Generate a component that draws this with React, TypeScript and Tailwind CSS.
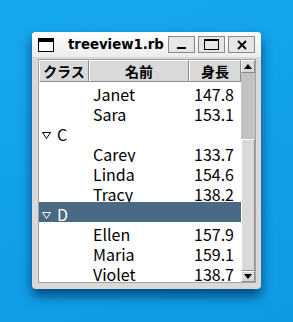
import React from "react";

type Row = { kind: "item"; name: string; h: string } | { kind: "group"; label: string; selected?: boolean };

const rows: Row[] = [
  { kind: "item", name: "Janet", h: "147.8" },
  { kind: "item", name: "Sara", h: "153.1" },
  { kind: "group", label: "C" },
  { kind: "item", name: "Carey", h: "133.7" },
  { kind: "item", name: "Linda", h: "154.6" },
  { kind: "item", name: "Tracy", h: "138.2" },
  { kind: "group", label: "D", selected: true },
  { kind: "item", name: "Ellen", h: "157.9" },
  { kind: "item", name: "Maria", h: "159.1" },
  { kind: "item", name: "Violet", h: "138.7" },
];

function Tri({ color }: { color: string }) {
  return (
    <svg width="9" height="7" viewBox="0 0 9 7" className="block">
      <path d="M0.5 0.5 H8.5 L4.5 6.5 Z" fill="none" stroke={color} strokeWidth="1" />
    </svg>
  );
}

const body = { fontFamily: '"Noto Sans CJK JP", "Noto Sans", sans-serif' };
const head = { fontFamily: '"Noto Sans CJK JP", "Noto Sans", sans-serif' };

export default function App() {
  return (
    <div className="w-[293px] h-[322px] bg-[linear-gradient(160deg,#16a8ee,#0e9be4)] pt-[32px] pl-[32px]">
      <div className="w-[229px] h-[257px] flex flex-col rounded-[4px] bg-[#d9d9d9] shadow-[0_7px_12px_rgba(0,25,70,0.65)] overflow-hidden">
        {/* title bar */}
        <div className="h-[26px] flex items-center bg-[linear-gradient(#ffffff,#ececec)] pl-[6px] pr-[6px]">
          <div className="w-[16px] h-[14px] border-[1.5px] border-black border-t-[4px] bg-white" />
          <div
            className="ml-[14px] text-[13.3px] font-bold text-black leading-none mt-[1px]"
            style={{ fontFamily: '"DejaVu Sans", sans-serif' }}
          >
            treeview1.rb
          </div>
          <div className="ml-auto flex gap-[3px]">
            <div className="w-[27px] h-[17px] border border-[#8a8a8a] bg-[#e6e6e6] flex items-end justify-center pb-[3px]">
              <div className="w-[9px] h-[2px] bg-black" />
            </div>
            <div className="w-[27px] h-[17px] border border-[#8a8a8a] bg-[#e6e6e6] flex items-center justify-center">
              <div className="w-[15px] h-[11px] border-[1.5px] border-black border-t-[2.5px]" />
            </div>
            <div className="w-[27px] h-[17px] border border-[#8a8a8a] bg-[#e6e6e6] flex items-center justify-center">
              <svg width="10" height="10" viewBox="0 0 10 10">
                <path d="M1 1 L9 9 M9 1 L1 9" stroke="black" strokeWidth="1.8" />
              </svg>
            </div>
          </div>
        </div>
        {/* body */}
        <div className="flex-1 pl-[6px] pr-[5px] pt-[2px] pb-[6px]">
          <div className="h-full flex border border-[#a3a3a3] bg-white">
            {/* tree */}
            <div className="w-[202px] flex flex-col">
              <div className="h-[22px] flex bg-[#d9d9d9] text-[14px] font-bold text-black" style={head}>
                <div className="w-[50px] flex items-center justify-center border border-t-white border-l-white border-r-[#8c8c8c] border-b-[#8c8c8c]">クラス</div>
                <div className="w-[100px] flex items-center justify-center border border-t-white border-l-white border-r-[#8c8c8c] border-b-[#8c8c8c]">名前</div>
                <div className="w-[52px] flex items-center justify-center border border-t-white border-l-white border-r-[#8c8c8c] border-b-[#8c8c8c]">身長</div>
              </div>
              <div className="flex-1 overflow-hidden">
                {rows.map((r, i) =>
                  r.kind === "item" ? (
                    <div key={i} className="h-[20px] flex overflow-hidden text-[16px] leading-[20px] pt-[2px] text-black" style={body}>
                      <div className="w-[54px]" />
                      <div className="w-[96px]">{r.name}</div>
                      <div className="w-[45px] text-right">{r.h}</div>
                    </div>
                  ) : (
                    <div
                      key={i}
                      className={`h-[20px] flex items-start overflow-hidden text-[16px] leading-[20px] pt-[2px] ${r.selected ? "bg-[#4a6984] text-white" : "text-black"}`}
                      style={body}
                    >
                      <div className="w-[18px] pl-[3px] pt-[8px]">
                        <Tri color={r.selected ? "#ffffff" : "#000000"} />
                      </div>
                      <div>{r.label}</div>
                    </div>
                  )
                )}
              </div>
            </div>
            {/* scrollbar */}
            <div className="w-[14px] flex flex-col bg-[#c3c3c3]">
              <div className="h-[13px] border border-t-white border-l-white border-r-[#8c8c8c] border-b-[#8c8c8c] bg-[#d9d9d9] flex items-center justify-center">
                <svg width="8" height="5" viewBox="0 0 8 5"><path d="M0 5 L4 0 L8 5 Z" fill="black" /></svg>
              </div>
              <div className="h-[66px]" />
              <div className="flex-1 border border-t-white border-l-white border-r-[#8c8c8c] border-b-[#8c8c8c] bg-[#d9d9d9]" />
              <div className="h-[11px] border border-t-white border-l-white border-r-[#8c8c8c] border-b-[#8c8c8c] bg-[#d9d9d9] flex items-center justify-center">
                <svg width="8" height="5" viewBox="0 0 8 5"><path d="M0 0 L4 5 L8 0 Z" fill="black" /></svg>
              </div>
            </div>
          </div>
        </div>
      </div>
    </div>
  );
}
